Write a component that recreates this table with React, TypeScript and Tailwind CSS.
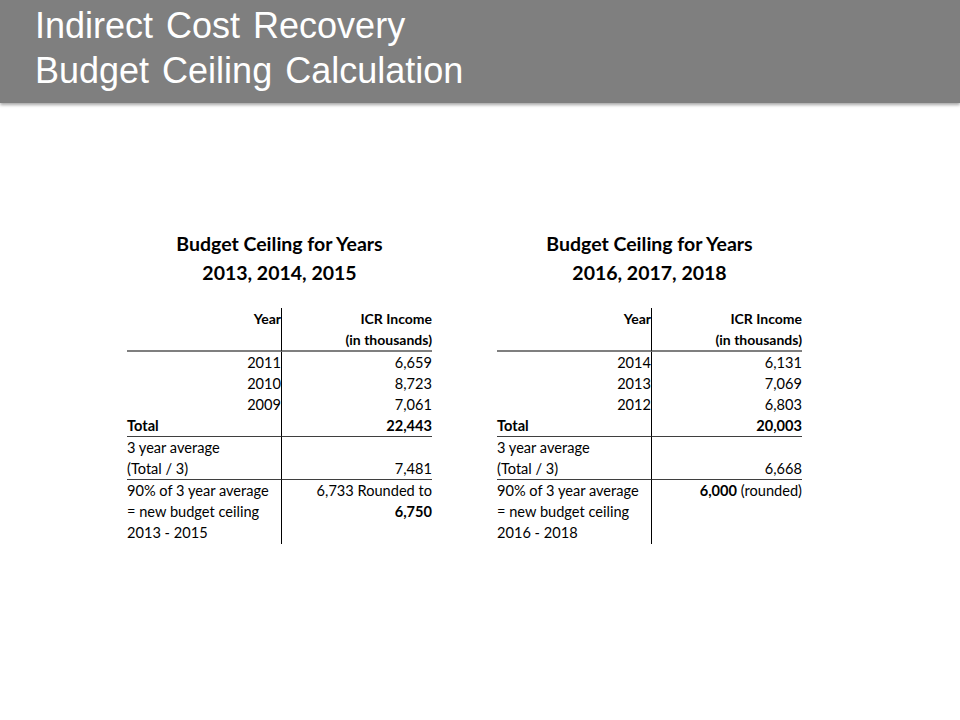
import React from "react";

type Row = {
  a: React.ReactNode;
  b: React.ReactNode;
  h: string;
  border: string;
  alignB?: string;
};

function Block({ years, rows }: { years: string; rows: Row[] }) {
  return (
    <div className="w-[305px]">
      <div className="text-center font-bold text-[19.5px] leading-[29px] text-black">
        <div>Budget Ceiling for Years</div>
        <div>{years}</div>
      </div>
      <div className="mt-[21px] text-[14.6px] leading-[21px] text-black">
        {rows.map((r, i) => (
          <div key={i} className="grid grid-cols-[155px_150px]">
            <div className={`${r.h} ${r.border} border-r border-r-black`}>{r.a}</div>
            <div className={`${r.h} ${r.border} flex flex-col ${r.alignB ?? "justify-start"} items-end text-right`}>
              {r.b}
            </div>
          </div>
        ))}
      </div>
    </div>
  );
}

function makeRows(
  y: [string, string, string],
  v: [string, string, string],
  total: string,
  avg: string,
  last: React.ReactNode,
  range: string
): Row[] {
  return [
    {
      a: <div className="text-right font-bold text-[14px]">Year</div>,
      b: (
        <div className="font-bold text-[14px]">
          <div>ICR Income</div>
          <div>(in thousands)</div>
        </div>
      ),
      h: "h-[44px] pt-[0px]",
      border: "border-b-[2px] border-b-[#7f7f7f]",
    },
    { a: <div className="text-right">{y[0]}</div>, b: v[0], h: "h-[21px]", border: "" },
    { a: <div className="text-right">{y[1]}</div>, b: v[1], h: "h-[21px]", border: "" },
    { a: <div className="text-right">{y[2]}</div>, b: v[2], h: "h-[21px]", border: "" },
    {
      a: <div className="font-bold">Total</div>,
      b: <div className="font-bold">{total}</div>,
      h: "h-[22px]",
      border: "border-b border-b-[#3f3f3f]",
    },
    {
      a: (
        <div>
          <div>3 year average</div>
          <div>(Total / 3)</div>
        </div>
      ),
      b: avg,
      h: "h-[43px]",
      border: "border-b border-b-[#3f3f3f]",
      alignB: "justify-end",
    },
    {
      a: (
        <div>
          <div>90% of 3 year average</div>
          <div>= new budget ceiling</div>
          <div>{range}</div>
        </div>
      ),
      b: last,
      h: "h-[64px]",
      border: "",
    },
  ];
}

export default function App() {
  const left = makeRows(
    ["2011", "2010", "2009"],
    ["6,659", "8,723", "7,061"],
    "22,443",
    "7,481",
    <div>
      <div>6,733 Rounded to</div>
      <div className="font-bold">6,750</div>
    </div>,
    "2013 - 2015"
  );
  const right = makeRows(
    ["2014", "2013", "2012"],
    ["6,131", "7,069", "6,803"],
    "20,003",
    "6,668",
    <div>
      <span className="font-bold">6,000</span> (rounded)
    </div>,
    "2016 - 2018"
  );
  return (
    <div className="w-[960px] h-[720px] bg-white overflow-hidden" style={{ fontFamily: "Lato, 'Noto Sans', sans-serif" }}>
      <div
        className="h-[103px] bg-[#7f7f7f] shadow-[0_2px_3px_rgba(0,0,0,0.35)] pl-[35px] pt-[3px] text-white text-[36px] leading-[45px] [word-spacing:3px]"
        style={{ fontFamily: "'Liberation Sans', Arial, sans-serif" }}
      >
        <div>Indirect Cost Recovery</div>
        <div>Budget Ceiling Calculation</div>
      </div>
      <div className="pt-[126px] pl-[127px] flex gap-[65px]">
        <Block years="2013, 2014, 2015" rows={left} />
        <Block years="2016, 2017, 2018" rows={right} />
      </div>
    </div>
  );
}
